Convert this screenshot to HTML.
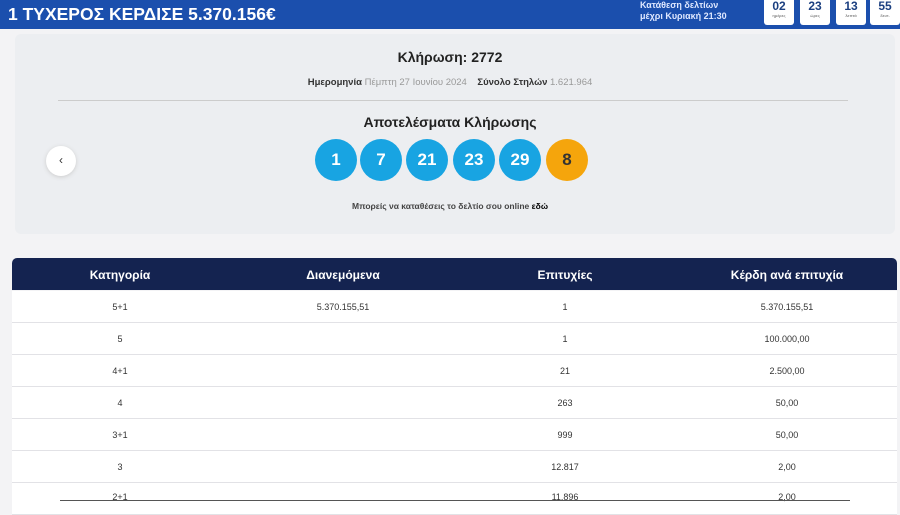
<!DOCTYPE html><html><head><meta charset="utf-8"><style>
body{margin:0;width:900px;height:507px;overflow:hidden;background:#f3f3f5;font-family:"Liberation Sans",sans-serif;position:relative}
.hdr{position:absolute;left:0;top:0;width:900px;height:29px;background:#1b4fad;color:#fff}
.t{position:absolute;left:8px;top:4px;font-weight:bold;font-size:17.5px}
.sub{position:absolute;left:640px;top:0;font-size:9px;font-weight:bold;line-height:11px;color:#dfe8ff}
.bx{position:absolute;top:0;width:30px;height:25px;background:#fff;border-radius:0 0 3px 3px;color:#1b3f80;text-align:center;font-size:12px;font-weight:bold;line-height:13px}
.bx i{display:block;font-size:4px;font-style:normal;color:#888;line-height:6px}
.card{position:absolute;left:15px;top:34px;width:880px;height:200px;background:#eceef1;border-radius:6px}
.c{position:absolute;width:900px;left:0;text-align:center}
.ball{position:absolute;top:139px;width:42px;height:42px;border-radius:50%;background:#18a4e2;color:#fff;font-weight:bold;font-size:17px;line-height:42px;text-align:center}
.th{position:absolute;left:12px;top:258px;width:885px;height:32px;background:#142350;border-radius:5px 5px 0 0;color:#fff;font-weight:bold;font-size:12px}
.th span,.r span{position:absolute;transform:translateX(-50%);white-space:nowrap}
.r{position:absolute;left:12px;width:885px;height:31px;border-bottom:1px solid #e2e2e6;background:#fff;font-size:9px;color:#333}
</style></head><body>
<div class="hdr"><div class="t">1 ΤΥΧΕΡΟΣ ΚΕΡΔΙΣΕ 5.370.156€</div>
<div class="sub">Κατάθεση δελτίων<br>μέχρι Κυριακή 21:30</div>
<div class="bx" style="left:764px">02<i>ημέρες</i></div><div class="bx" style="left:800px">23<i>ώρες</i></div><div class="bx" style="left:836px">13<i>λεπτά</i></div><div class="bx" style="left:870px">55<i>δευτ.</i></div></div>
<div class="card"></div>
<div class="c" style="top:49px;font-weight:bold;font-size:14px;color:#222">Κλήρωση: 2772</div>
<div class="c" style="top:77px;font-size:9.5px;color:#999"><b style="color:#333">Ημερομηνία</b> Πέμπτη 27 Ιουνίου 2024 &nbsp;&nbsp; <b style="color:#333">Σύνολο Στηλών</b> 1.621.964</div>
<div style="position:absolute;left:58px;top:100px;width:790px;height:1px;background:#ccc"></div>
<div class="c" style="top:114px;font-weight:bold;font-size:14px;color:#222">Αποτελέσματα Κλήρωσης</div>
<div style="position:absolute;left:46px;top:146px;width:30px;height:30px;border-radius:50%;background:#fff;box-shadow:0 1px 4px #ccc;text-align:center;line-height:28px;font-size:12px;color:#333">‹</div>
<div class="ball" style="left:315px">1</div><div class="ball" style="left:360px">7</div><div class="ball" style="left:406px">21</div><div class="ball" style="left:453px">23</div><div class="ball" style="left:499px">29</div><div class="ball" style="left:546px;background:#f5a50c;color:#333">8</div>
<div class="c" style="top:201px;font-size:8.5px;font-weight:bold;color:#444">Μπορείς να καταθέσεις το δελτίο σου online <span style="color:#000">εδώ</span></div>
<div class="th"><span style="left:108px;top:10px">Κατηγορία</span><span style="left:331px;top:10px">Διανεμόμενα</span><span style="left:553px;top:10px">Επιτυχίες</span><span style="left:775px;top:10px">Κέρδη ανά επιτυχία</span></div>
<div class="r" style="top:291px"><span style="left:108px;top:11px">5+1</span><span style="left:331px;top:11px">5.370.155,51</span><span style="left:553px;top:11px">1</span><span style="left:775px;top:11px">5.370.155,51</span></div>
<div class="r" style="top:323px"><span style="left:108px;top:11px">5</span><span style="left:553px;top:11px">1</span><span style="left:775px;top:11px">100.000,00</span></div>
<div class="r" style="top:355px"><span style="left:108px;top:11px">4+1</span><span style="left:553px;top:11px">21</span><span style="left:775px;top:11px">2.500,00</span></div>
<div class="r" style="top:387px"><span style="left:108px;top:11px">4</span><span style="left:553px;top:11px">263</span><span style="left:775px;top:11px">50,00</span></div>
<div class="r" style="top:419px"><span style="left:108px;top:11px">3+1</span><span style="left:553px;top:11px">999</span><span style="left:775px;top:11px">50,00</span></div>
<div class="r" style="top:451px"><span style="left:108px;top:11px">3</span><span style="left:553px;top:11px">12.817</span><span style="left:775px;top:11px">2,00</span></div>
<div class="r" style="top:483px"><span style="left:108px;top:9px">2+1</span><span style="left:553px;top:9px">11.896</span><span style="left:775px;top:9px">2,00</span></div>
<div style="position:absolute;left:60px;top:500px;width:790px;height:1px;background:#555"></div>
</body></html>
